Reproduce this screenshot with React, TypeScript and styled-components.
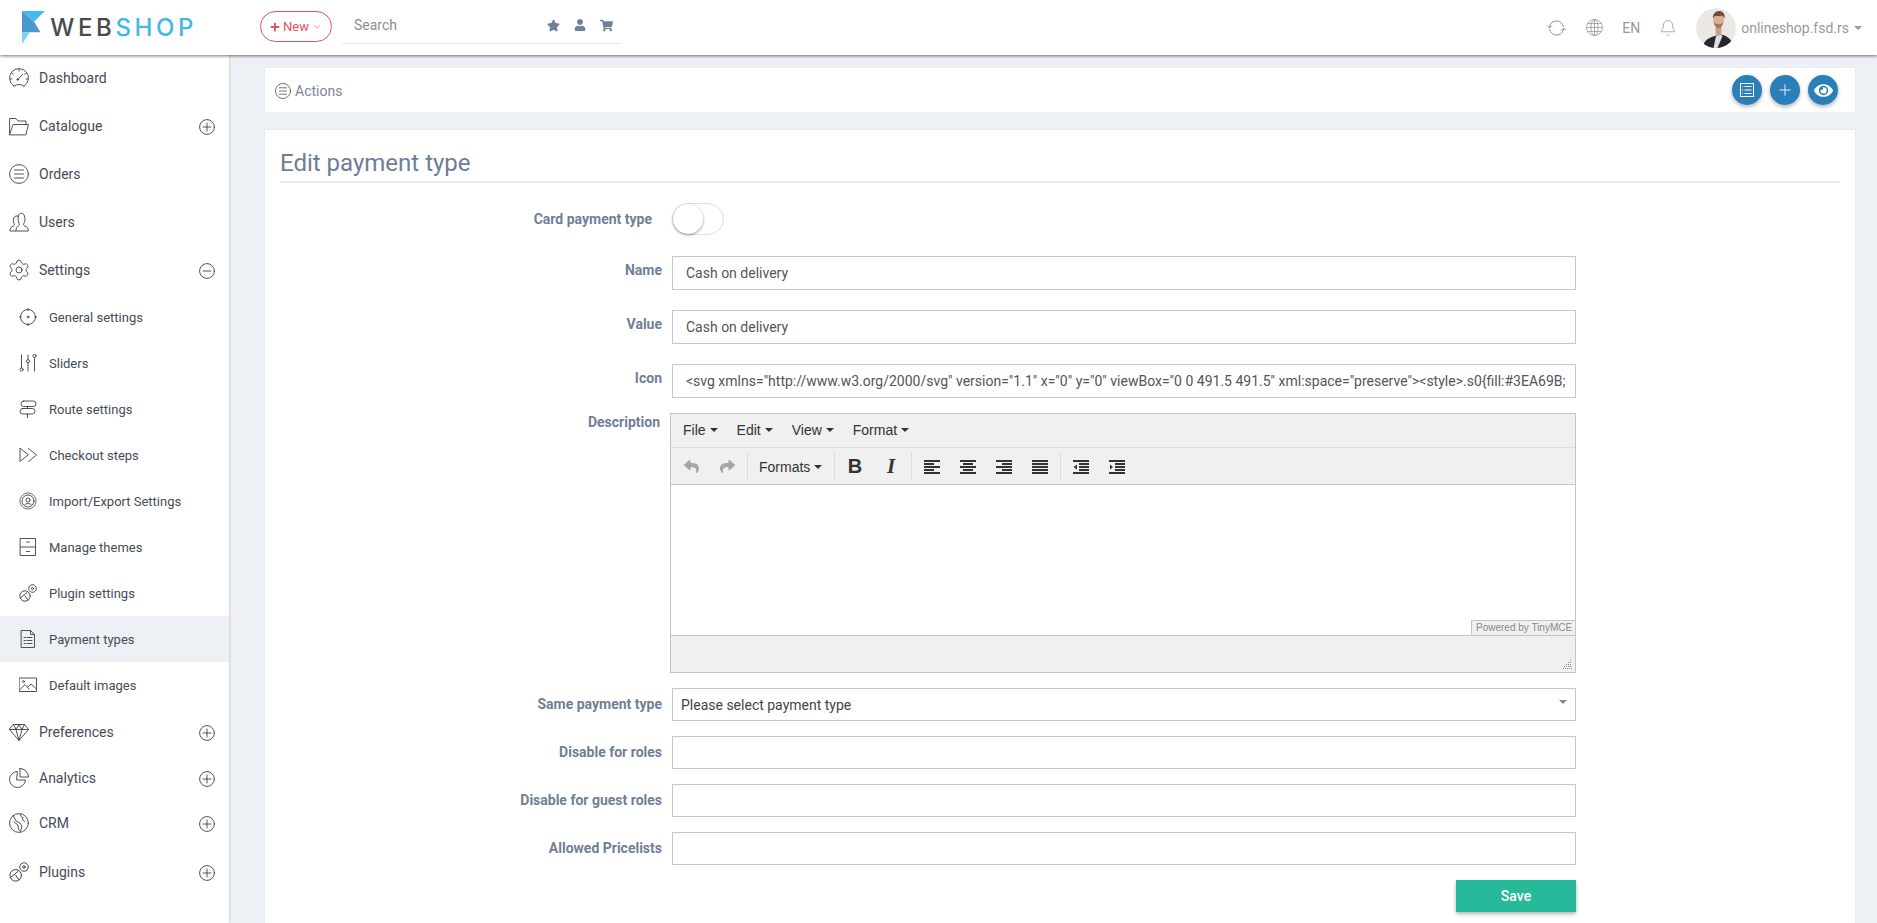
import React from 'react';
import styled, { createGlobalStyle } from 'styled-components';
import { FaStar, FaUser, FaShoppingCart, FaPlus, FaEye, FaReply, FaShare } from 'react-icons/fa';
import { Settings as Gear, Bell, Plus, ChevronDown } from 'lucide-react';

const GlobalStyle = createGlobalStyle`
  html, body { margin: 0; height: 100%; overflow: hidden; }
  body { font-family: Roboto, 'Liberation Sans', sans-serif; background: #edf0f5; }
  * { box-sizing: border-box; }
`;

const Page = styled.div`
  display: flex;
  flex-direction: column;
  height: 100vh;
  overflow: hidden;
`;

/* header */
const Header = styled.header`
  flex: 0 0 55px;
  display: flex;
  align-items: center;
  padding: 0 15px 0 22px;
  background: #fff;
  box-shadow: 0 1px 3px rgba(0, 0, 0, 0.55);
  position: relative;
  z-index: 2;
`;

const Logo = styled.div`
  display: flex;
  align-items: flex-start;
  gap: 5px;
  width: 175px;
  height: 37px;
  margin-top: -1px;
`;

const LogoText = styled.div`
  font-family: Inter, sans-serif;
  font-weight: 500;
  font-size: 24px;
  line-height: 27px;
  margin-top: 5px;
  letter-spacing: 3.6px;
  color: #4a4a4d;
  white-space: nowrap;
  span { color: #42b9e6; }
`;

const NewButton = styled.button`
  margin: -2px 0 0 63px;
  width: 72px;
  height: 31px;
  border: 1px solid #e8505c;
  border-radius: 16px;
  background: #fff;
  color: #e8505c;
  font: 400 13px Roboto, sans-serif;
  display: flex;
  align-items: center;
  justify-content: center;
  gap: 3px;
  padding: 0;
`;

const SearchBox = styled.div`
  margin: 2px 0 0 10px;
  width: 280px;
  height: 31px;
  border-bottom: 1px solid #e8ebf0;
  display: flex;
  align-items: center;
  padding: 0 9px 6px 12px;
  font-size: 14px;
  color: #8d8d8d;
`;

const SearchIcons = styled.div`
  margin-left: auto;
  display: flex;
  align-items: center;
  gap: 14px;
  color: #6f819b;
  font-size: 13px;
`;

const HeaderRight = styled.div`
  margin-left: auto;
  display: flex;
  align-items: center;
  gap: 19px;
  color: #999;
  font-size: 14px;
`;

const Account = styled.div`
  display: flex;
  align-items: center;
  gap: 5px;
`;

const Caret = styled.i<{ $size?: number; $color?: string; $lift?: number }>`
  display: inline-block;
  width: 0;
  height: 0;
  margin-bottom: ${p => p.$lift ?? 0}px;
  border-style: solid;
  border-width: ${p => p.$size ?? 4}px ${p => p.$size ?? 4}px 0;
  border-color: ${p => p.$color ?? '#999'} transparent transparent;
`;

/* page body */
const Body = styled.div`
  flex: 1;
  display: flex;
  min-height: 0;
`;

const Sidebar = styled.nav`
  flex: 0 0 229px;
  margin-top: -1px;
  background: #fff;
  box-shadow: 1px 0 2px rgba(0, 0, 0, 0.12);
  color: #454c58;
  position: relative;
  z-index: 1;
`;

const NavRow = styled.div<{ $h?: number }>`
  height: ${p => p.$h ?? 48}px;
  display: flex;
  align-items: center;
  gap: 10px;
  padding: 0 14px 0 9px;
  font-size: 14px;
`;

const SubRow = styled.div<{ $active?: boolean }>`
  height: 46px;
  display: flex;
  align-items: center;
  gap: 12px;
  padding-left: 19px;
  font-size: 13px;
  background: ${p => (p.$active ? '#edf0f5' : 'transparent')};
`;

const Toggle = styled.span`
  margin: 2px 0 0 auto;
  display: flex;
`;

const Line = styled.svg<{ $size?: number }>`
  width: ${p => p.$size ?? 20}px;
  height: ${p => p.$size ?? 20}px;
  flex: none;
  fill: none;
  stroke: #3b3f48;
  stroke-width: 0.9;
  stroke-linecap: round;
  stroke-linejoin: round;
`;

const GearIcon = styled(Gear)`
  flex: none;
  margin: -2px;
  color: #3b3f48;
`;

const Main = styled.main`
  flex: 1;
  min-width: 0;
  padding: 12px 21px 0 35px;
  display: flex;
  flex-direction: column;
  gap: 16px;
`;

const ActionsCard = styled.section`
  flex: 0 0 46px;
  display: flex;
  align-items: center;
  padding: 0 17px 0 10px;
  background: #fff;
  border: 1px solid #e8ebf0;
  color: #7b8696;
  font-size: 14px;
`;

const ActionsTitle = styled.div`
  display: flex;
  align-items: center;
  gap: 4px;
  margin-top: 2px;
`;

const RoundButtons = styled.div`
  margin-left: auto;
  display: flex;
  gap: 8px;
`;

const RoundButton = styled.button`
  width: 30px;
  height: 30px;
  border: 0;
  border-radius: 50%;
  padding: 0;
  background: #2a7fb8;
  color: #fff;
  display: flex;
  align-items: center;
  justify-content: center;
  box-shadow: 0 2px 4px rgba(0, 0, 0, 0.3);
`;

const FormCard = styled.section`
  flex: 1;
  background: #fff;
  border: 1px solid #e8ebf0;
  border-bottom: 0;
  padding: 0 15px;
`;

const Title = styled.h1`
  margin: 0;
  height: 53px;
  padding-top: 16px;
  border-bottom: 2px solid #e8ebf0;
  font-size: 24px;
  line-height: 34px;
  font-weight: 400;
  color: #6c7e96;
`;

const Form = styled.form`
  width: 1295px;
  margin: 20px 0 0 1px;
`;

const Row = styled.div<{ $gap?: number }>`
  display: grid;
  grid-template-columns: 381px 904px;
  column-gap: 10px;
  margin-top: ${p => p.$gap ?? 15}px;
`;

const Label = styled.label<{ $top?: number; $right?: number }>`
  text-align: right;
  font-size: 14px;
  font-weight: 700;
  line-height: 20px;
  color: #6f7f97;
  padding-top: ${p => p.$top ?? 4}px;
  padding-right: ${p => p.$right ?? 0}px;
  white-space: nowrap;
`;

const Input = styled.input<{ $h?: number }>`
  display: block;
  width: 100%;
  height: ${p => p.$h ?? 33}px;
  border: 1px solid #c8c8c8;
  padding: 0 2px 0 13px;
  background: #fff;
  color: #555;
  font: 400 14px Roboto, sans-serif;
  outline: none;
`;

const Switch = styled.div`
  width: 52px;
  height: 32px;
  border: 1px solid #dfdfdf;
  border-radius: 16px;
  background: #fff;
  display: flex;
`;

const SwitchKnob = styled.span`
  width: 30px;
  height: 30px;
  border-radius: 50%;
  background: #fff;
  box-shadow: 0 1px 3px rgba(0, 0, 0, 0.4);
`;

const Select = styled.div`
  height: 33px;
  border: 1px solid #c8c8c8;
  display: flex;
  align-items: center;
  justify-content: space-between;
  padding: 0 8px;
  color: #444;
  font-size: 14px;
`;

/* tinymce */
const Editor = styled.div`
  width: 906px;
  height: 260px;
  margin: 1px 0 0 -2px;
  border: 1px solid #c5c5c5;
  background: #f0f0f0;
  display: flex;
  flex-direction: column;
  font-family: 'Liberation Sans', Arial, sans-serif;
  color: #333;
`;

const MenuBar = styled.div`
  flex: 0 0 34px;
  display: flex;
  align-items: center;
  padding: 0 0 2px 12px;
  gap: 19px;
  border-bottom: 1px solid #ddd;
  font-size: 14px;
`;

const MenuItem = styled.span`
  display: flex;
  align-items: center;
  gap: 4px;
`;

const ToolBar = styled.div`
  flex: 0 0 37px;
  display: flex;
  align-items: center;
  padding: 1px 0 0 2px;
  border-bottom: 1px solid #c5c5c5;
`;

const Tool = styled.span<{ $muted?: boolean }>`
  width: 36px;
  height: 28px;
  display: flex;
  align-items: center;
  justify-content: center;
  color: ${p => (p.$muted ? '#a6a6a6' : '#333')};
  font-size: 15px;
`;

const Divider = styled.span`
  width: 1px;
  height: 29px;
  margin: 0 2px;
  background: #dcdcdc;
`;

const FormatsTool = styled.span`
  width: 82px;
  display: flex;
  align-items: center;
  gap: 4px;
  padding-left: 9px;
  font-size: 14px;
  color: #333;
`;

const BoldGlyph = styled.b`
  font: 700 20px 'Liberation Sans', sans-serif;
  color: #333;
`;

const ItalicGlyph = styled.i`
  font: italic 700 21px 'Liberation Serif', serif;
  color: #333;
`;

const EditArea = styled.div`
  flex: 1;
  background: #fff;
  position: relative;
  border-bottom: 1px solid #c5c5c5;
`;

const Powered = styled.span`
  position: absolute;
  right: 0;
  bottom: -1px;
  width: 104px;
  height: 16px;
  border: 1px solid #c5c5c5;
  border-right: 0;
  background: #f0f0f0;
  color: #8a8a8a;
  font-size: 10px;
  line-height: 14px;
  padding-left: 4px;
  white-space: nowrap;
  overflow: hidden;
`;

const StatusBar = styled.div`
  flex: 0 0 36px;
  display: flex;
  justify-content: flex-end;
  align-items: flex-end;
  padding: 0 3px 3px 0;
`;

const SaveButton = styled.button`
  display: block;
  width: 120px;
  height: 32px;
  margin-left: auto;
  border: 0;
  background: #26b99a;
  color: #fff;
  font: 500 14px Roboto, sans-serif;
  box-shadow: 0 2px 4px rgba(0, 0, 0, 0.3);
`;

const Small = { $size: 18 };

const PlusCircle = () => (
  <Line $size={16} viewBox="0 0 16 16">
    <circle cx="8" cy="8" r="7.4" />
    <path d="M4 8h8M8 4v8" />
  </Line>
);

const MinusCircle = () => (
  <Line $size={16} viewBox="0 0 16 16">
    <circle cx="8" cy="8" r="7.4" />
    <path d="M4 8h8" />
  </Line>
);

const DashIcon = () => (
  <Line viewBox="0 0 20 20">
    <path d="M5 18.2A9.500 9.500 0 1 1 15 18.2" />
    <path d="M5 18.2Q10 14.500 15 18.2" />
    <path d="M10 1v2M3 5l1.400 1.200M17 5l-1.400 1.200M1 11h2M19 11h-2" />
    <path d="M8.800 11.500 13.500 6.500" />
    <circle cx="8.600" cy="11.600" r="0.800" />
  </Line>
);

const FolderIcon = () => (
  <Line viewBox="0 0 20 20">
    <path d="M.6 18.500V2.500h6.400l2 2.500h8v3.500" />
    <path d="M.6 18.500 4 8.500h15.400L17 18.500z" />
  </Line>
);

const ListCircle = ({ size = 20 }: { size?: number }) => (
  <Line $size={size} viewBox="0 0 20 20">
    <circle cx="10" cy="10" r="9.400" />
    <path d="M5.500 6h9M5.500 10h9M5.500 14h9" />
  </Line>
);

const UsersIcon = () => (
  <Line viewBox="0 0 20 20">
    <path d="M7 19H1c0-3 1-4 3.500-5 1-.5 1-1.500.5-2.500C4 10 3.800 6 6 4.500c1.500-1 3-.5 3.500 0" />
    <path d="M8 19h11.400c0-3-1-4-4-5.200-1-.5-1-1.500-.5-2.500 1.200-1.600 1.500-5 .5-7.300C15 1 11.500.5 10 2.500 8.500 5 9 9.500 10 11.300c.5 1 .5 2-.5 2.500C7.500 14.700 7 16 7 19" />
  </Line>
);

const GeneralIcon = () => (
  <Line {...Small} viewBox="0 0 18 18">
    <circle cx="9" cy="9" r="7.500" />
    <circle cx="9" cy="9" r="0.900" />
    <path d="M9 0v2.500M9 15.500V18M0 9h2M16 9h2" />
  </Line>
);

const SlidersIcon = () => (
  <Line {...Small} viewBox="0 0 18 18">
    <path d="M2.500 1v13M9 1v4.500M9 9v8M15.500 3.500V17" />
    <circle cx="2.500" cy="15.500" r="1.600" />
    <circle cx="9" cy="7.200" r="1.600" />
    <circle cx="15.500" cy="1.800" r="1.600" />
  </Line>
);

const RouteIcon = () => (
  <Line {...Small} viewBox="0 0 18 18">
    <rect x="2" y="1" width="15" height="5.500" rx="2.700" />
    <rect x="1" y="8.500" width="15" height="5.500" rx="2.700" />
    <path d="M8.500 6.500v2M8.500 14v4" />
  </Line>
);

const StepsIcon = () => (
  <Line {...Small} viewBox="0 0 18 18">
    <path d="M1 2.500v13L9 9zM9.500 2.500 17.500 9l-8 6.500" />
  </Line>
);

const ImportIcon = () => (
  <Line {...Small} viewBox="0 0 18 18">
    <circle cx="9" cy="9" r="8" strokeDasharray="1 1" />
    <circle cx="9" cy="9" r="6" />
    <circle cx="9" cy="8" r="2" />
    <path d="M5.500 13c1-2 6-2 7 0" />
  </Line>
);

const ThemesIcon = () => (
  <Line {...Small} viewBox="0 0 18 18">
    <rect x="1.500" y="0.500" width="15" height="17" />
    <path d="M1.500 9h15M7.500 4h3M7.500 13.500h3" />
  </Line>
);

const PluginIcon = ({ size = 18 }: { size?: number }) => (
  <Line $size={size} viewBox="0 0 18 18">
    <circle cx="6" cy="12" r="5.200" />
    <path d="M1.500 14 8 8.500M6 12l3 4" />
    <circle cx="13.500" cy="4.500" r="3.800" strokeDasharray="1.500 .6" />
    <circle cx="13.500" cy="4.500" r="1.100" />
  </Line>
);

const PaymentIcon = () => (
  <Line {...Small} viewBox="0 0 18 18">
    <path d="M2.500.5h9l4 4v13h-13z" />
    <path d="M11.500.5v4h4" />
    <path d="M5 7.500h1.500M8 7.500h5M5 10.500h1.500M8 10.500h5M5 13.500h1.500M8 13.500h5" />
  </Line>
);

const ImagesIcon = () => (
  <Line {...Small} viewBox="0 0 18 18">
    <rect x="0.500" y="2" width="17" height="13.500" />
    <circle cx="4.500" cy="5.500" r="1" />
    <path d="M.5 14 6 8.500l4 4.500M8.500 11.300 12 8l5.500 5" />
  </Line>
);

const DiamondIcon = () => (
  <Line viewBox="0 0 20 20">
    <path d="M4.500 2.500h11L19.500 7.500 10 18.500.5 7.500z" />
    <path d="M.5 7.500h19M7 7.500 10 18.500 13 7.500 10 2.500 7 7.500M4.500 2.500 7 7.500M15.500 2.500 13 7.500" />
  </Line>
);

const PieIcon = () => (
  <Line viewBox="0 0 20 20">
    <path d="M8 3.500A8 8 0 1 0 16.500 12H8z" />
    <path d="M11 .5v8.500h8.500A8.500 8.500 0 0 0 11 .5z" />
  </Line>
);

const WorldIcon = () => (
  <Line viewBox="0 0 20 20">
    <circle cx="10" cy="10" r="9.400" />
    <path d="M4 2.500 7 8l4 2 2 3-1.500 5.500-2-2L9 12 5 9M12 1c-1 2 0 3 2 3.500L13.500 7l2 1.500" />
  </Line>
);

const RefreshIcon = () => (
  <svg width="21" height="18" viewBox="0 0 21 18" fill="none" stroke="#8f8f8f" strokeWidth="1">
    <path d="M3.500 8A7 7 0 0 1 16.500 5.500L17.500 8M17.500 10A7 7 0 0 1 4.500 12.500L3.500 10" />
    <path d="M1 6.500 3.500 9 6 6.500M15 11.500 17.500 9 20 11.500" />
  </svg>
);

const GlobeIcon = () => (
  <svg width="17" height="17" viewBox="0 0 17 17" fill="none" stroke="#999" strokeWidth="0.8">
    <circle cx="8.500" cy="8.500" r="8" />
    <ellipse cx="8.500" cy="8.500" rx="3.600" ry="8" />
    <path d="M8.500.5v16M.5 8.500h16M1.700 4.500h13.600M1.700 12.500h13.600" />
  </svg>
);

const BellIcon = styled(Bell)`
  color: #8f8f8f;
`;

const Avatar = () => (
  <svg width="40" height="40" viewBox="0 0 40 40" style={{ borderRadius: '50%', flex: 'none' }}>
    <circle cx="20" cy="20" r="20" fill="#ebe8e3" />
    <path d="M7 40c0-6 4-10 12-12l3-2 5 1c6 2 9 5 11 13z" fill="#28282d" />
    <path d="M17.500 40l2.500-12 3-2 3.500 2-5 12z" fill="#dfdee1" />
    <path d="M19.500 17h6v8l-3 3-3-3z" fill="#c99f86" />
    <ellipse cx="22.500" cy="12" rx="5.300" ry="7.500" fill="#d8ae94" />
    <path d="M17.500 14c1 4 3 6 5 6s4-2 5-6c-1 1.500-2.500 2-5 2s-4-.5-5-2z" fill="#9c7a62" />
    <path d="M17 11c-.7-5 2.500-8 6-8s6.500 2.500 5.500 8c-.5-2-1.500-3-3-3.300-3 .5-5.500 0-7 .5-.8.5-1 1.500-1.500 2.800z" fill="#6e4e37" />
  </svg>
);

const BarsIcon = ({ kind }: { kind: 'left' | 'center' | 'right' | 'justify' | 'outdent' | 'indent' }) => {
  const widths: Record<string, [number, number][]> = {
    left: [[0, 16], [0, 10], [0, 16], [0, 10], [0, 16]],
    center: [[0, 16], [3, 10], [0, 16], [3, 10], [0, 16]],
    right: [[0, 16], [6, 10], [0, 16], [6, 10], [0, 16]],
    justify: [[0, 16], [0, 16], [0, 16], [0, 16], [0, 16]],
    outdent: [[0, 16], [6, 10], [6, 10], [6, 10], [0, 16]],
    indent: [[0, 16], [6, 10], [6, 10], [6, 10], [0, 16]],
  };
  return (
    <svg width="16" height="14" viewBox="0 0 16 14" fill="#333">
      {widths[kind].map(([x, w], i) => (
        <rect key={i} x={x} y={i * 3} width={w} height="2" />
      ))}
      {kind === 'outdent' && <path d="M4 4.500v5L.5 7z" />}
      {kind === 'indent' && <path d="M1 4.500v5L4 7z" />}
    </svg>
  );
};

const iconValue =
  '<svg xmlns="http://www.w3.org/2000/svg" version="1.1" x="0" y="0" viewBox="0 0 491.5 491.5" xml:space="preserve"><style>.s0{fill:#3EA69B;';

export default function App() {
  return (
    <Page>
      <GlobalStyle />
      <Header>
        <Logo>
          <svg width="26" height="37" viewBox="0 0 26 37">
            <path d="M0 0H25.500L13.500 12z" fill="#3fbde8" />
            <path d="M0 0 13.500 12 20.500 23.700H0z" fill="#4a98cf" />
            <path d="M0 23.700H9L0 37z" fill="#7ed0f5" />
          </svg>
          <LogoText>
            WEB<span>SHOP</span>
          </LogoText>
        </Logo>
        <NewButton type="button">
          <FaPlus size={10} />
          New
          <ChevronDown size={10} strokeWidth={1.5} />
        </NewButton>
        <SearchBox>
          Search
          <SearchIcons>
            <FaStar />
            <FaUser size={12} />
            <FaShoppingCart />
          </SearchIcons>
        </SearchBox>
        <HeaderRight>
          <RefreshIcon />
          <GlobeIcon />
          EN
          <BellIcon size={18} strokeWidth={1} />
          <Account>
            <Avatar />
            onlineshop.fsd.rs
            <Caret $size={4} />
          </Account>
        </HeaderRight>
      </Header>
      <Body>
        <Sidebar>
          <NavRow><DashIcon />Dashboard</NavRow>
          <NavRow><FolderIcon />Catalogue<Toggle><PlusCircle /></Toggle></NavRow>
          <NavRow><ListCircle />Orders</NavRow>
          <NavRow><UsersIcon />Users</NavRow>
          <NavRow><GearIcon size={24} strokeWidth={0.9} />Settings<Toggle><MinusCircle /></Toggle></NavRow>
          <SubRow><GeneralIcon />General settings</SubRow>
          <SubRow><SlidersIcon />Sliders</SubRow>
          <SubRow><RouteIcon />Route settings</SubRow>
          <SubRow><StepsIcon />Checkout steps</SubRow>
          <SubRow><ImportIcon />Import/Export Settings</SubRow>
          <SubRow><ThemesIcon />Manage themes</SubRow>
          <SubRow><PluginIcon />Plugin settings</SubRow>
          <SubRow $active><PaymentIcon />Payment types</SubRow>
          <SubRow><ImagesIcon />Default images</SubRow>
          <NavRow><DiamondIcon />Preferences<Toggle><PlusCircle /></Toggle></NavRow>
          <NavRow $h={44}><PieIcon />Analytics<Toggle><PlusCircle /></Toggle></NavRow>
          <NavRow $h={46}><WorldIcon />CRM<Toggle><PlusCircle /></Toggle></NavRow>
          <NavRow $h={52}><PluginIcon size={20} />Plugins<Toggle><PlusCircle /></Toggle></NavRow>
        </Sidebar>
        <Main>
          <ActionsCard>
            <ActionsTitle>
              <ListCircle size={16} />
              Actions
            </ActionsTitle>
            <RoundButtons>
              <RoundButton type="button">
                <svg width="16" height="16" viewBox="0 0 16 16" fill="none" stroke="#fff" strokeWidth="1">
                  <rect x="1.500" y="1.500" width="13" height="13" />
                  <path d="M5.500 4.500h7M5.500 8h7M5.500 11.500h7M3 4.500h1M3 8h1M3 11.500h1" />
                </svg>
              </RoundButton>
              <RoundButton type="button"><Plus size={18} strokeWidth={1.2} /></RoundButton>
              <RoundButton type="button"><FaEye size={19} /></RoundButton>
            </RoundButtons>
          </ActionsCard>
          <FormCard>
            <Title>Edit payment type</Title>
            <Form>
              <Row $gap={0}>
                <Label $top={6} $right={10}>Card payment type</Label>
                <Switch><SwitchKnob /></Switch>
              </Row>
              <Row $gap={21}>
                <Label>Name</Label>
                <Input $h={34} readOnly value="Cash on delivery" />
              </Row>
              <Row $gap={20}>
                <Label>Value</Label>
                <Input $h={34} readOnly value="Cash on delivery" />
              </Row>
              <Row $gap={20}>
                <Label>Icon</Label>
                <Input $h={34} readOnly value={iconValue} />
              </Row>
              <Row $gap={14}>
                <Label $top={0} $right={2}>Description</Label>
                <Editor>
                  <MenuBar>
                    <MenuItem>File <Caret $size={4} $color="#333" /></MenuItem>
                    <MenuItem>Edit <Caret $size={4} $color="#333" /></MenuItem>
                    <MenuItem>View <Caret $size={4} $color="#333" /></MenuItem>
                    <MenuItem>Format <Caret $size={4} $color="#333" /></MenuItem>
                  </MenuBar>
                  <ToolBar>
                    <Tool $muted><FaReply /></Tool>
                    <Tool $muted><FaShare /></Tool>
                    <Divider />
                    <FormatsTool>Formats <Caret $size={4} $color="#333" /></FormatsTool>
                    <Divider />
                    <Tool><BoldGlyph>B</BoldGlyph></Tool>
                    <Tool><ItalicGlyph>I</ItalicGlyph></Tool>
                    <Divider />
                    <Tool><BarsIcon kind="left" /></Tool>
                    <Tool><BarsIcon kind="center" /></Tool>
                    <Tool><BarsIcon kind="right" /></Tool>
                    <Tool><BarsIcon kind="justify" /></Tool>
                    <Divider />
                    <Tool><BarsIcon kind="outdent" /></Tool>
                    <Tool><BarsIcon kind="indent" /></Tool>
                  </ToolBar>
                  <EditArea>
                    <Powered>Powered by TinyMCE</Powered>
                  </EditArea>
                  <StatusBar>
                    <svg width="9" height="9" viewBox="0 0 9 9" fill="#8a8a8a">
                      {[[7, 0], [5, 2], [7, 2], [3, 4], [5, 4], [7, 4], [1, 6], [3, 6], [5, 6], [7, 6], [0, 8], [2, 8], [4, 8], [6, 8], [8, 8]].map(([x, y]) => (
                        <rect key={`${x}-${y}`} x={x} y={y} width="1" height="1" />
                      ))}
                    </svg>
                  </StatusBar>
                </Editor>
              </Row>
              <Row>
                <Label $top={6}>Same payment type</Label>
                <Select>
                  Please select payment type
                  <Caret $size={4} $color="#888" $lift={5} />
                </Select>
              </Row>
              <Row>
                <Label $top={6}>Disable for roles</Label>
                <Input />
              </Row>
              <Row>
                <Label $top={6}>Disable for guest roles</Label>
                <Input />
              </Row>
              <Row>
                <Label $top={6}>Allowed Pricelists</Label>
                <Input />
              </Row>
              <Row>
                <span />
                <SaveButton type="button">Save</SaveButton>
              </Row>
            </Form>
          </FormCard>
        </Main>
      </Body>
    </Page>
  );
}
